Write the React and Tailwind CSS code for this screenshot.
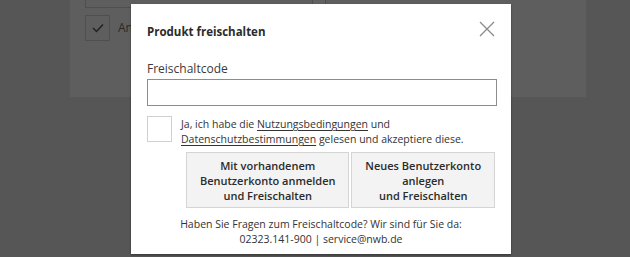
import React from 'react';

const font = { fontFamily: '"Open Sans", "Liberation Sans", sans-serif' };

const BackgroundPage = () => (
  <div className="h-[257px] w-full bg-[#565656]">
    <div className="ml-[70px] h-[97px] w-[516px] bg-[#5e5e5e] pl-[15px]">
      <div className="flex h-[8px]">
        <div className="h-[8px] w-[227px] border-b border-l border-[#4f4f4f]" />
        <div className="h-[8px] w-[14px] border-b border-l border-r border-[#4f4f4f] bg-[#626262]" />
      </div>
      <div className="mt-[7px] flex items-center gap-[8px]">
        <div className="flex h-[26px] w-[25px] items-center justify-center border border-[#4f4f4f]">
          <svg width="12" height="10" viewBox="0 0 12 10" fill="none">
            <path d="M1 5l3.5 3.5L11 1.5" stroke="#1f1f1f" strokeWidth="1.4" />
          </svg>
        </div>
        <span className="text-[12px] text-[#2a2a2a]">An</span>
      </div>
    </div>
  </div>
);

const Modal = () => (
  <div className="absolute left-[131px] top-[4px] h-[250px] w-[380px] bg-white shadow-[0_1px_2px_rgba(0,0,0,0.4)]">
    <div className="flex h-[19px] items-start justify-between px-[16px] mt-[17px]">
      <h2 className="mt-[2px] text-[11.5px] font-bold leading-[18px] text-[#2b2b2b]">Produkt freischalten</h2>
      <button className="mt-[0px]">
        <svg width="16" height="16" viewBox="0 0 16 16" fill="none">
          <path d="M1 1l14 14M15 1L1 15" stroke="#8a8a8a" strokeWidth="1.3" />
        </svg>
      </button>
    </div>

    <div className="px-[16px] pt-[21px]">
      <label className="block text-[12px] leading-[16px] text-[#3a3a3a]">Freischaltcode</label>
      <div className="mt-[2px] h-[27px] w-[350px] border border-[#8d8d8d]" />

      <div className="mt-[10px] flex gap-[9px]">
        <div className="h-[26px] w-[25px] shrink-0 border border-[#d0d0d0]" />
        <p className="pt-[1px] text-[10.5px] leading-[15px] text-[#333]">
          Ja, ich habe die <span className="underline underline-offset-2">Nutzungsbedingungen</span> und
          <br />
          <span className="underline underline-offset-2">Datenschutzbestimmungen</span> gelesen und akzeptiere diese.
        </p>
      </div>

      <div className="ml-[39px] mt-[5px] flex gap-[2px]">
        <button className="h-[56px] w-[164px] border border-[#d4d4d4] bg-[#f3f3f3] text-[11px] font-semibold leading-[15px] text-[#2b2b2b]">
          Mit vorhandenem
          <br />
          Benutzerkonto anmelden
          <br />
          und Freischalten
        </button>
        <button className="h-[56px] w-[144px] border border-[#d4d4d4] bg-[#f3f3f3] text-[11px] font-semibold leading-[15px] text-[#2b2b2b]">
          Neues Benutzerkonto
          <br />
          anlegen
          <br />
          und Freischalten
        </button>
      </div>
    </div>

    <p className="mt-[9px] text-center text-[10.5px] leading-[15px] text-[#333]">
      Haben Sie Fragen zum Freischaltcode? Wir sind für Sie da:
      <br />
      02323.141-900 | service@nwb.de
    </p>
  </div>
);

export default function App() {
  return (
    <div className="relative h-[257px] w-[630px] overflow-hidden" style={font}>
      <BackgroundPage />
      <Modal />
    </div>
  );
}
